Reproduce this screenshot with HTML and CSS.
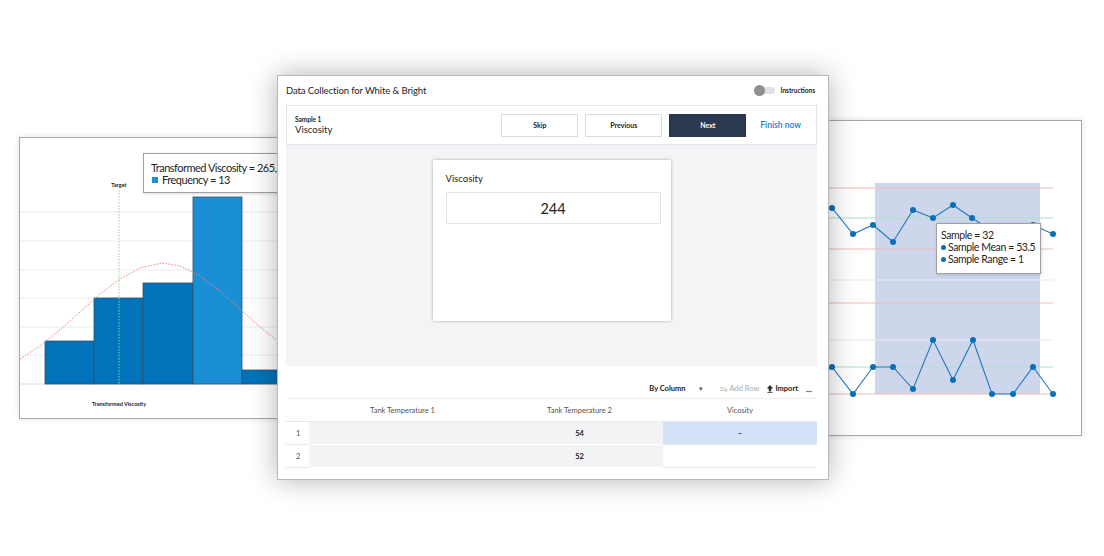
FILE: index.html
```html
<!DOCTYPE html>
<html lang="en">
<head>
  <meta charset="UTF-8">
  <meta name="viewport" content="width=device-width, initial-scale=1.0">
  <title>Data Collection for White &amp; Bright</title>
  <link rel="stylesheet" href="styles.css">
</head>
<body>
  <div class="stage">

    <!-- histogram window (back left) -->
    <div class="window histogram">
      <svg class="chart" width="298" height="280" viewBox="0 0 298 280">
        <g class="grid-lines">
          <line x1="0" y1="74" x2="298" y2="74"/>
          <line x1="0" y1="103" x2="298" y2="103"/>
          <line x1="0" y1="132" x2="298" y2="132"/>
          <line x1="0" y1="160" x2="298" y2="160"/>
          <line x1="0" y1="189" x2="298" y2="189"/>
          <line x1="0" y1="217" x2="298" y2="217"/>
          <line class="base" x1="0" y1="246" x2="298" y2="246"/>
        </g>
        <g class="bars">
          <rect x="25" y="203" width="49" height="43"/>
          <rect x="74" y="160" width="49" height="86"/>
          <rect x="123" y="145" width="50" height="101"/>
          <rect class="hot" x="173" y="59" width="49" height="187"/>
          <rect x="222" y="232" width="49" height="14"/>
        </g>
        <line class="target" x1="99" y1="52" x2="99" y2="246"/>
        <polyline class="normal" points="0,221 20,208 40,192 60,174 80,156 100,141 120,130 142,125 160,128 180,138 200,153 220,171 240,189 260,205 280,218 298,228"/>
        <text class="tiny" x="99" y="49">Target</text>
        <text class="tiny" x="99" y="268">Transformed Viscosity</text>
      </svg>
      <div class="tip hist-tip">
        <div>Transformed Viscosity = 265, 270</div>
        <div><span class="swatch"></span>Frequency = 13</div>
      </div>
    </div>

    <!-- control chart window (back right) -->
    <div class="window control">
      <svg class="chart" width="290" height="314" viewBox="0 0 290 314">
        <rect class="band" x="84" y="62" width="165" height="211"/>
        <g class="limits">
          <line class="red" x1="0" y1="67" x2="262" y2="67"/>
          <line class="green" x1="0" y1="97" x2="262" y2="97"/>
          <line class="red" x1="0" y1="128" x2="262" y2="128"/>
          <line class="soft" x1="0" y1="159" x2="262" y2="159"/>
          <line class="red" x1="0" y1="182" x2="262" y2="182"/>
          <line class="soft" x1="0" y1="219" x2="262" y2="219"/>
          <line class="green" x1="0" y1="246" x2="262" y2="246"/>
          <line class="red" x1="0" y1="273" x2="262" y2="273"/>
        </g>
        <polyline class="series" points="21,80 41,87 62,113 82,104 102,121 122,89 142,97 162,84 181,97 201,110 221,116 242,104 262,113"/>
        <polyline class="series" points="21,260 41,246 62,273 82,246 102,246 122,268 142,219 162,259 182,219 201,273 222,273 242,246 262,273"/>
        <g class="dots">
          <circle cx="41" cy="87" r="3"/><circle cx="62" cy="113" r="3"/><circle cx="82" cy="104" r="3"/>
          <circle cx="102" cy="121" r="3"/><circle cx="122" cy="89" r="3"/><circle cx="142" cy="97" r="3"/>
          <circle cx="162" cy="84" r="3"/><circle cx="181" cy="97" r="3"/><circle cx="201" cy="110" r="3"/>
          <circle cx="221" cy="116" r="3"/><circle cx="242" cy="104" r="3"/><circle cx="262" cy="113" r="3"/>
          <circle cx="41" cy="246" r="3"/><circle cx="62" cy="273" r="3"/><circle cx="82" cy="246" r="3"/>
          <circle cx="102" cy="246" r="3"/><circle cx="122" cy="268" r="3"/><circle cx="142" cy="219" r="3"/>
          <circle cx="162" cy="259" r="3"/><circle cx="182" cy="219" r="3"/><circle cx="201" cy="273" r="3"/>
          <circle cx="222" cy="273" r="3"/><circle cx="242" cy="246" r="3"/><circle cx="262" cy="273" r="3"/>
        </g>
      </svg>
      <div class="tip ctrl-tip">
        <div>Sample = 32</div>
        <div><span class="dot"></span>Sample Mean = 53.5</div>
        <div><span class="dot"></span>Sample Range = 1</div>
      </div>
    </div>

    <!-- data collection window (front) -->
    <div class="window collect">
      <header class="collect-head">
        <span class="collect-title">Data Collection for White &amp; Bright</span>
        <span class="toggle"><i></i></span>
        <span class="instr">Instructions</span>
      </header>

      <div class="sample-bar">
        <div class="sample-info">
          <small>Sample 1</small>
          <span>Viscosity</span>
        </div>
        <div class="actions">
          <button class="btn">Skip</button>
          <button class="btn">Previous</button>
          <button class="btn primary">Next</button>
          <a class="finish">Finish now</a>
        </div>
      </div>

      <div class="entry-area">
        <div class="entry-card">
          <label>Viscosity</label>
          <div class="entry-input">244</div>
        </div>
      </div>

      <div class="toolbar">
        <span class="tool strong">By Column</span>
        <span class="tool caret">&#9662;</span>
        <span class="tool muted">
          <svg width="8" height="6" viewBox="0 0 8 6"><path d="M0 2h5M0 4.5h4M6 2.5v3.5M4.5 4.2h3" stroke="#b0b0b0" stroke-width="0.8" fill="none"/></svg>
          Add Row
        </span>
        <span class="tool strong">
          <svg width="6" height="8" viewBox="0 0 6 8"><path d="M3 0.5L0.6 3.2h1.6v2.8h1.6V3.2h1.6zM0.4 7.4h5.2" stroke="#222" stroke-width="0.8" fill="#222"/></svg>
          Import
        </span>
        <span class="tool more">
          <svg width="6" height="3" viewBox="0 0 6 3"><circle cx="1" cy="1.5" r="0.7"/><circle cx="3" cy="1.5" r="0.7"/><circle cx="5" cy="1.5" r="0.7"/></svg>
        </span>
      </div>

      <table class="data">
        <thead>
          <tr><th class="num"></th><th>Tank Temperature 1</th><th>Tank Temperature 2</th><th>Vicosity</th></tr>
        </thead>
        <tbody>
          <tr><td class="num">1</td><td class="ro"></td><td class="ro">54</td><td class="active">&ndash;</td></tr>
          <tr><td class="num">2</td><td class="ro"></td><td class="ro">52</td><td></td></tr>
        </tbody>
      </table>
    </div>

  </div>
</body>
</html>
```

FILE: styles.css
```css
* { box-sizing: border-box; }
body { margin: 0; background: #fff; font-family: Lato, "Open Sans", Arial, sans-serif; color: #222; }

.stage { position: relative; width: 1104px; height: 556px; overflow: hidden; }

/* floating windows */
.window {
  position: absolute;
  background: #fff;
  border: 1px solid #a8a8a8;
  box-shadow: 0 0 6px rgba(0, 0, 0, 0.12);
  overflow: hidden;
}
.histogram { left: 19px; top: 137px; width: 300px; height: 282px; }
.control { left: 790px; top: 120px; width: 292px; height: 316px; }
.collect {
  left: 277px; top: 75px; width: 552px; height: 405px;
  border-color: #b8b8b8;
  box-shadow: 0 0 26px rgba(0, 0, 0, 0.3);
  padding: 0 11px 0 8px;
  display: flex;
  flex-direction: column;
  overflow: visible;
}

.chart { display: block; }
.grid-lines line { stroke: #ececf1; stroke-width: 1; }
.grid-lines .base { stroke: #dcdce2; }
.bars rect { fill: #0073ba; stroke: #34506c; stroke-width: 0.8; }
.bars .hot { fill: #1b8fd6; }
.target { stroke: #8fd49a; stroke-width: 1; stroke-dasharray: 1.5 1.5; }
.normal { fill: none; stroke: #ee8080; stroke-width: 1; stroke-dasharray: 1.5 1.5; }
.tiny { font-size: 5.5px; font-weight: 700; text-anchor: middle; fill: #222; }

.band { fill: #cdd6ea; }
.limits line { stroke-width: 1.2; }
.limits .red { stroke: #f2b9b9; }
.limits .green { stroke: #a9e2cb; }
.limits .soft { stroke: #e7e9f1; }
.series { fill: none; stroke: #2479bd; stroke-width: 1.1; }
.dots circle { fill: #0a6fb7; }

/* chart tooltips */
.tip {
  position: absolute;
  background: #fff;
  border: 1px solid #a0a0a0;
  box-shadow: 1px 1px 3px rgba(0, 0, 0, 0.15);
  color: #1e1e1e;
  white-space: nowrap;
}
.hist-tip { left: 123px; top: 15px; width: 180px; height: 40px; padding: 8px 0 0 7px; font-size: 11px; line-height: 12px; letter-spacing: -0.5px; }
.ctrl-tip { left: 145px; top: 102px; width: 105px; height: 51px; padding: 5px 0 0 4px; font-size: 10.5px; line-height: 12px; letter-spacing: -0.4px; }
.swatch { display: inline-block; width: 6px; height: 6px; background: #1b8fd6; margin: 0 4px 1px 1px; }
.dot { display: inline-block; width: 5px; height: 5px; border-radius: 50%; background: #0a6fb7; margin: 0 2px 1px 0; }

/* data collection window */
.collect-head { height: 29px; display: flex; align-items: center; }
.collect-title { font-size: 9.5px; flex: 1; letter-spacing: -0.1px; }
.toggle { width: 20px; height: 7px; background: #e2e2e2; border-radius: 4px; position: relative; margin-right: 6px; }
.toggle i { position: absolute; left: -1px; top: -2px; width: 11px; height: 11px; border-radius: 50%; background: #8f8f8f; }
.instr { font-size: 6.5px; font-weight: 700; margin-right: 2px; }

.sample-bar {
  height: 40px;
  border: 1px solid #e3e5ea;
  display: flex;
  align-items: center;
  justify-content: space-between;
  padding: 0 15px 0 8px;
}
.sample-info { display: flex; flex-direction: column; }
.sample-info small { font-size: 6.5px; font-weight: 700; line-height: 9px; }
.sample-info span { font-size: 9.5px; line-height: 12px; }
.actions { display: flex; align-items: center; gap: 7px; }
.btn {
  width: 77px; height: 23px;
  border: 1px solid #d8dbe0;
  background: #fff;
  font: 700 7px Lato, "Open Sans", sans-serif;
  color: #222;
}
.btn.primary { background: #2b3950; border-color: #2b3950; color: #fff; }
.finish { font-size: 8.5px; font-weight: 600; color: #1a7ccc; margin-left: 7px; }

.entry-area { height: 221px; background: #f3f4f6; display: flex; justify-content: center; padding-top: 15px; }
.entry-card {
  width: 238px; height: 161px;
  background: #fff;
  box-shadow: 0 0 3px rgba(0, 0, 0, 0.3);
  padding: 13px 10px 0 13px;
  display: flex;
  flex-direction: column;
}
.entry-card label { font-size: 9.5px; line-height: 12px; margin-bottom: 7px; }
.entry-input {
  height: 32px;
  border: 1px solid #e3e3e3;
  display: flex; align-items: center; justify-content: center;
  font-size: 14.5px;
}

.toolbar { height: 32px; display: flex; justify-content: flex-end; align-items: flex-end; padding: 0 5px 5px 0; gap: 8px; }
.tool { font-size: 7.5px; display: flex; align-items: center; gap: 2px; }
.tool.strong { font-weight: 700; }
.tool.muted { color: #aaa; }
.caret { color: #555; font-size: 7px; margin: 0 9px 0 5px; }
.more svg { fill: #333; }

.data { width: 100%; border-collapse: collapse; font-size: 7.5px; table-layout: fixed; }
.data th { height: 23px; font-weight: 400; color: #555; border-top: 1px solid #eceef1; border-bottom: 1px solid #e6e8eb; }
.data th:nth-child(2) { width: 187px; }
.data th:nth-child(3) { width: 167px; }
.data td { height: 23px; text-align: center; font-weight: 700; border-bottom: 1px solid #e7e8eb; }
.data .num { width: 23px; text-align: left; padding-left: 10px; font-weight: 400; color: #555; }
.data .ro { background: #f2f3f5; border-bottom-color: #fff; }
.data .active { background: #d3e2f6; }
```
